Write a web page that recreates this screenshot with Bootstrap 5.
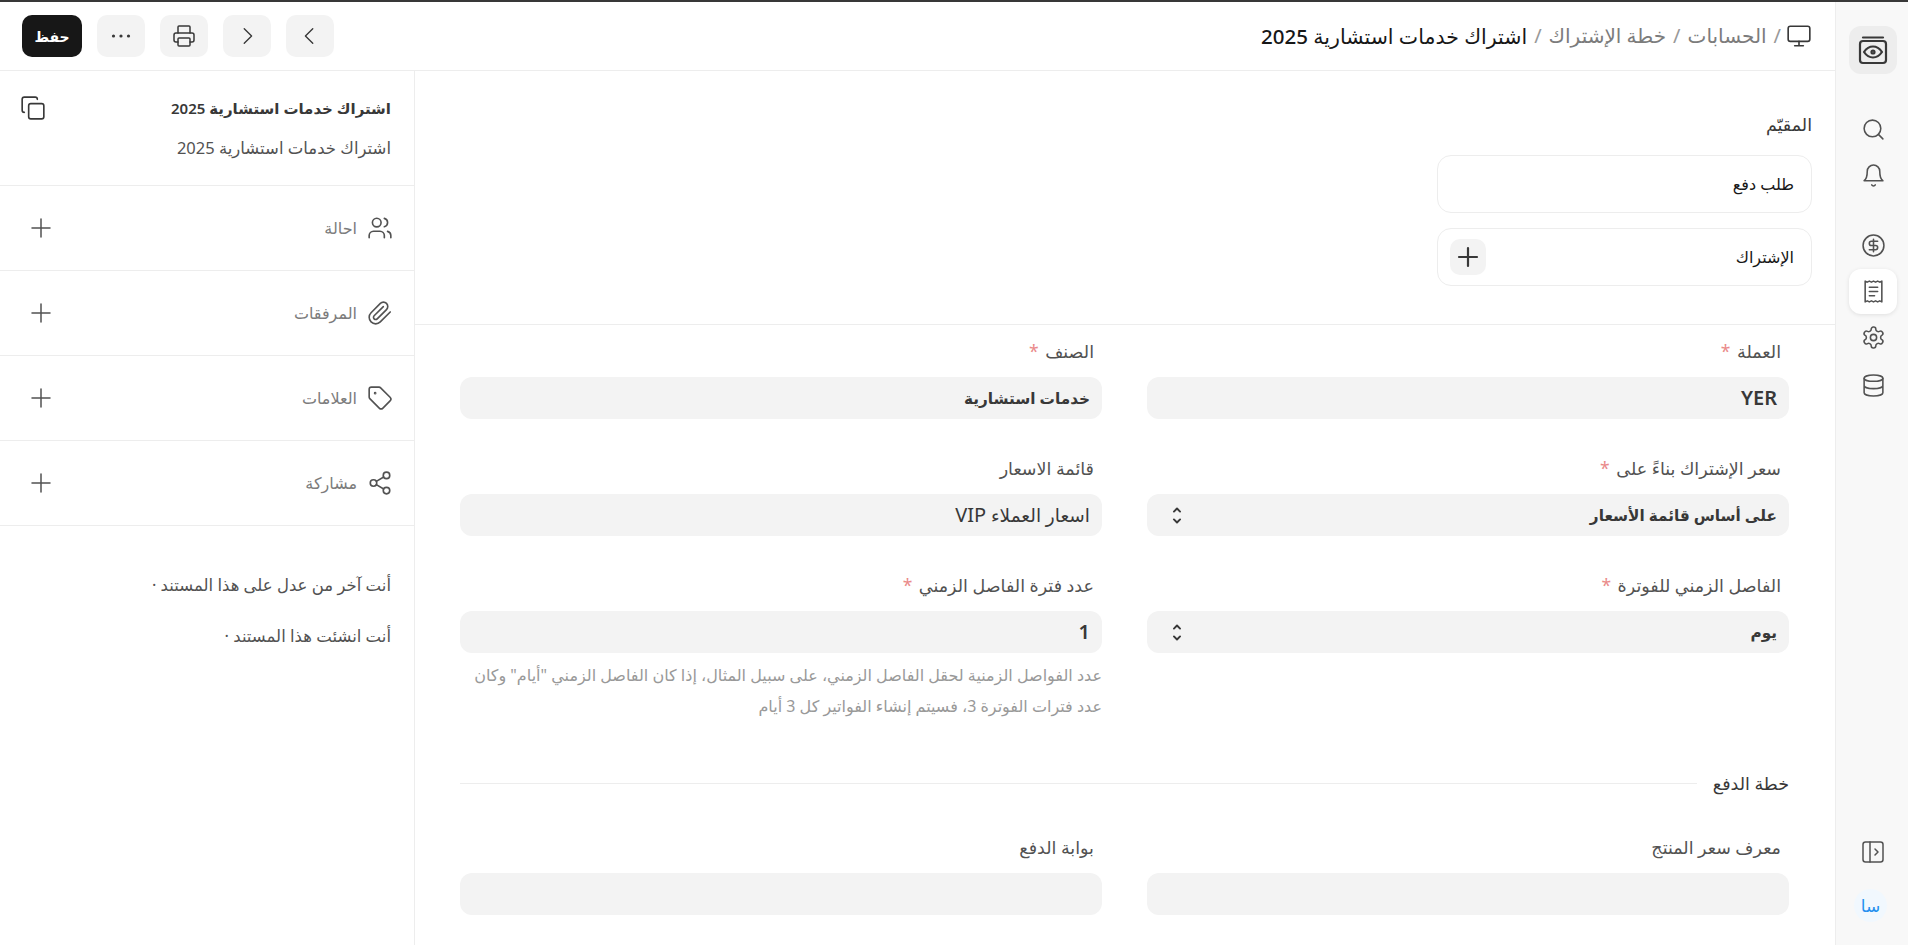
<!DOCTYPE html>
<html lang="ar" dir="rtl">
<head>
  <meta charset="UTF-8">
  <meta name="viewport" content="width=device-width, initial-scale=1">
  <title>اشتراك خدمات استشارية 2025</title>
  <link href="https://cdn.jsdelivr.net/npm/bootstrap@5.3.3/dist/css/bootstrap.min.css" rel="stylesheet">
  <style>
    html, body { height: 100%; }
    body { font-family: "Noto Sans", "DejaVu Sans", sans-serif; color: #383838; background: #fff; border-top: 2px solid #383838; overflow: hidden; font-size: 15px; }
    .ico { fill: none; stroke: currentColor; stroke-width: 1.5; stroke-linecap: round; stroke-linejoin: round; flex: none; }
    .ico-bold { stroke-width: 2.2; }
    .app-shell { height: 943px; }

    .side-rail { width: 73px; flex: none; background: #f8f8f8; border-left: 1px solid #ededed; padding: 24px 11px 23px 12px; color: #525252; }
    .rail-logo { width: 48px; height: 48px; border-radius: 12px; background: #ededed; color: #383838; margin-bottom: 33px; }
    .rail-item { width: 48px; height: 45px; border-radius: 12px; margin-bottom: 1px; }
    .rail-item.on { background: #fff; box-shadow: 0 1px 4px rgba(0,0,0,.1); }
    .rail-gap { margin-top: 24px; }
    .rail-db { margin-top: 2px; }
    .rail-avatar { width: 33px; height: 33px; border-radius: 50%; background: #f1f8fe; color: #2490ef; font-size: 17px; margin: 14px 10px 0 0; }

    .page-head { height: 69px; border-bottom: 1px solid #ededed; padding: 0 23px 0 22px; }
    .crumbs { font-size: 20px; color: #7c7c7c; }
    .crumbs b { font-size: 20.5px; font-weight: 500; color: #171717; }
    .crumbs i { font-style: normal; color: #999; margin: 0 7px; }
    .crumb-ico { color: #383838; margin-left: -2px; }
    .tool-btn { width: 48px; height: 42px; border-radius: 10px; background: #f3f3f3; color: #383838; border: 0; padding: 0; }
    .save-btn { width: 60px; height: 42px; border-radius: 10px; background: #171717; color: #fff; border: 0; padding: 0; font-size: 14px; font-weight: 600; }

    .form-pane { min-width: 0; }
    .top-block { height: 254px; border-bottom: 1px solid #ededed; padding: 41px 23px 0 0; }
    .top-label { font-size: 17.5px; line-height: 24px; margin-bottom: 19px; color: #383838; }
    .link-box { width: 375px; height: 58px; border: 1px solid #ededed; border-radius: 14px; padding: 0 17px 0 12px; margin-bottom: 15px; font-size: 16px; color: #171717; }
    .add-btn { width: 36px; height: 36px; border-radius: 10px; background: #f3f3f3; color: #383838; }

    .field-grid { display: grid; grid-template-columns: 642px 642px; column-gap: 45px; row-gap: 37px; padding: 14px 46px 0 45px; }
    .fld-label { font-size: 17.5px; line-height: 24px; margin: 0 8px 14px 0; color: #525252; display: block; }
    .fld-label em { font-style: normal; color: #ea8a8a; margin-right: 2px; }
    .fld-box { height: 42px; border-radius: 12px; background: #f3f3f3; padding: 0 12px 0 23px; font-size: 18.5px; color: #383838; }
    .fld-box.strong { font-size: 15.3px; font-weight: 600; }
    .fld-box .fld-latin { font-size: 20px; }
    .fld-help { font-size: 16px; line-height: 31px; color: #999; margin: 7px 0 0; }
    .section-title { padding: 49px 46px 40px 45px; font-size: 17.5px; line-height: 24px; color: #383838; }
    .section-title hr { flex-grow: 1; margin: 0; border-color: #ededed; opacity: 1; }

    .info-pane { width: 415px; flex: none; border-right: 1px solid #ededed; }
    .info-head { height: 115px; border-bottom: 1px solid #ededed; padding: 23px 23px 0 20px; }
    .info-title { font-size: 15px; font-weight: 600; line-height: 28px; color: #383838; }
    .info-sub { font-size: 16.5px; line-height: 28px; margin-top: 12px; color: #525252; }
    .info-copy { margin-top: 1px; }
    .info-row { height: 85px; border-bottom: 1px solid #ededed; padding: 0 21px 0 29px; color: #525252; }
    .info-row span { font-size: 16px; color: #7c7c7c; }
    .info-notes { padding: 45px 23px 0 0; font-size: 16.5px; line-height: 28px; color: #525252; }
    .info-notes div { margin-bottom: 23px; }
  </style>
</head>
<body>
  <svg width="0" height="0" class="d-block position-absolute">
    <symbol id="i-monitor" viewBox="0 0 24 24"><rect x="2" y="3" width="20" height="14" rx="2"/><path d="M8 21h8M12 17v4"/></symbol>
    <symbol id="i-search" viewBox="0 0 24 24"><circle cx="11" cy="11" r="8"/><path d="m21 21-4.3-4.3"/></symbol>
    <symbol id="i-bell" viewBox="0 0 24 24"><path d="M6 8a6 6 0 0 1 12 0c0 7 3 9 3 9H3s3-2 3-9"/><path d="M10.3 21a1.94 1.94 0 0 0 3.4 0"/></symbol>
    <symbol id="i-dollar" viewBox="0 0 24 24"><circle cx="12" cy="12" r="10"/><path d="M16 8h-6a2 2 0 1 0 0 4h4a2 2 0 1 1 0 4H8M12 18V6"/></symbol>
    <symbol id="i-receipt" viewBox="0 0 24 24"><path d="M4 2v20l2-1 2 1 2-1 2 1 2-1 2 1 2-1 2 1V2l-2 1-2-1-2 1-2-1-2 1-2-1-2 1Z"/><path d="M8 8h8M8 12h8M8 16h5"/></symbol>
    <symbol id="i-gear" viewBox="0 0 24 24"><path d="M12.22 2h-.44a2 2 0 0 0-2 2v.18a2 2 0 0 1-1 1.73l-.43.25a2 2 0 0 1-2 0l-.15-.08a2 2 0 0 0-2.73.73l-.22.38a2 2 0 0 0 .73 2.73l.15.1a2 2 0 0 1 1 1.72v.51a2 2 0 0 1-1 1.74l-.15.09a2 2 0 0 0-.73 2.73l.22.38a2 2 0 0 0 2.73.73l.15-.08a2 2 0 0 1 2 0l.43.25a2 2 0 0 1 1 1.73V20a2 2 0 0 0 2 2h.44a2 2 0 0 0 2-2v-.18a2 2 0 0 1 1-1.73l.43-.25a2 2 0 0 1 2 0l.15.08a2 2 0 0 0 2.73-.73l.22-.39a2 2 0 0 0-.73-2.73l-.15-.08a2 2 0 0 1-1-1.74v-.5a2 2 0 0 1 1-1.74l.15-.09a2 2 0 0 0 .73-2.73l-.22-.38a2 2 0 0 0-2.73-.73l-.15.08a2 2 0 0 1-2 0l-.43-.25a2 2 0 0 1-1-1.73V4a2 2 0 0 0-2-2z"/><circle cx="12" cy="12" r="3"/></symbol>
    <symbol id="i-db" viewBox="0 0 24 24"><ellipse cx="12" cy="5" rx="9" ry="3"/><path d="M3 5v14a9 3 0 0 0 18 0V5M3 12a9 3 0 0 0 18 0"/></symbol>
    <symbol id="i-panel" viewBox="0 0 24 24"><rect x="2" y="2" width="20" height="20" rx="2.5"/><path d="M9 2v20M14 9l3 3-3 3"/></symbol>
    <symbol id="i-users" viewBox="0 0 24 24"><path d="M16 21v-2a4 4 0 0 0-4-4H6a4 4 0 0 0-4 4v2"/><circle cx="9" cy="7" r="4"/><path d="M22 21v-2a4 4 0 0 0-3-3.87M16 3.13a4 4 0 0 1 0 7.75"/></symbol>
    <symbol id="i-clip" viewBox="0 0 24 24"><path d="m21.44 11.05-9.19 9.19a6 6 0 0 1-8.49-8.49l8.57-8.57A4 4 0 1 1 18 8.84l-8.59 8.57a2 2 0 0 1-2.83-2.83l8.49-8.48"/></symbol>
    <symbol id="i-tag" viewBox="0 0 24 24"><path d="M12.586 2.586A2 2 0 0 0 11.172 2H4a2 2 0 0 0-2 2v7.172a2 2 0 0 0 .586 1.414l8.704 8.704a2.426 2.426 0 0 0 3.42 0l6.58-6.58a2.426 2.426 0 0 0 0-3.42z"/><circle cx="7.5" cy="7.5" r=".5"/></symbol>
    <symbol id="i-share" viewBox="0 0 24 24"><circle cx="18" cy="5" r="3"/><circle cx="6" cy="12" r="3"/><circle cx="18" cy="19" r="3"/><path d="m8.59 13.51 6.83 3.98M15.41 6.51l-6.82 3.98"/></symbol>
    <symbol id="i-plus" viewBox="0 0 24 24"><path d="M12 3v18M3 12h18"/></symbol>
    <symbol id="i-copy" viewBox="0 0 24 24"><rect x="8" y="8" width="14" height="14" rx="2"/><path d="M4 16c-1.1 0-2-.9-2-2V4c0-1.1.9-2 2-2h10c1.1 0 2 .9 2 2"/></symbol>
    <symbol id="i-updown" viewBox="0 0 16 24"><path d="m4.500 7.500 3.500-3.500 3.500 3.500M4.500 16.500l3.500 3.500 3.500-3.500"/></symbol>
  </svg>

  <div class="app-shell d-flex">
    <!-- شريط الايقونات -->
    <aside class="side-rail d-flex flex-column">
      <div class="rail-logo d-flex align-items-center justify-content-center">
        <svg class="ico ico-bold" width="30" height="30" viewBox="0 0 30 30"><path d="M5 2.500h20"/><rect x="2" y="6" width="26" height="22" rx="3"/><path d="M6 17c2.500-3.700 5.500-5.500 9-5.500s6.500 1.800 9 5.500c-2.500 3.700-5.500 5.500-9 5.500S8.500 20.700 6 17Z"/><circle cx="15" cy="17" r="1.500"/></svg>
      </div>
      <div class="rail-item d-flex align-items-center justify-content-center"><svg class="ico" width="25" height="25"><use href="#i-search"/></svg></div>
      <div class="rail-item d-flex align-items-center justify-content-center"><svg class="ico" width="25" height="25"><use href="#i-bell"/></svg></div>
      <div class="rail-item rail-gap d-flex align-items-center justify-content-center"><svg class="ico" width="25" height="25"><use href="#i-dollar"/></svg></div>
      <div class="rail-item on d-flex align-items-center justify-content-center"><svg class="ico" width="25" height="25"><use href="#i-receipt"/></svg></div>
      <div class="rail-item d-flex align-items-center justify-content-center"><svg class="ico" width="25" height="25"><use href="#i-gear"/></svg></div>
      <div class="rail-item rail-db d-flex align-items-center justify-content-center"><svg class="ico" width="25" height="25"><use href="#i-db"/></svg></div>
      <div class="rail-item mt-auto d-flex align-items-center justify-content-center"><svg class="ico" width="24" height="24"><use href="#i-panel"/></svg></div>
      <div class="rail-avatar d-flex align-items-center justify-content-center">سا</div>
    </aside>

    <main class="flex-grow-1 d-flex flex-column" style="min-width:0">
      <header class="page-head d-flex align-items-center justify-content-between">
        <div class="crumbs d-flex align-items-center">
          <svg class="ico crumb-ico" width="26" height="26"><use href="#i-monitor"/></svg>
          <i>/</i><span>الحسابات</span><i>/</i><span>خطة الإشتراك</span><i>/</i><b>اشتراك خدمات استشارية 2025</b>
        </div>
        <div class="d-flex align-items-center" style="gap:15px">
          <button class="tool-btn d-flex align-items-center justify-content-center" aria-label="السابق"><svg class="ico" width="22" height="22" viewBox="0 0 24 24"><path d="m15 4-8 8 8 8"/></svg></button>
          <button class="tool-btn d-flex align-items-center justify-content-center" aria-label="التالي"><svg class="ico" width="22" height="22" viewBox="0 0 24 24"><path d="m9 4 8 8-8 8"/></svg></button>
          <button class="tool-btn d-flex align-items-center justify-content-center" aria-label="طباعة"><svg class="ico" width="24" height="24" viewBox="0 0 24 24"><path d="M6 18H4a2 2 0 0 1-2-2v-5a2 2 0 0 1 2-2h16a2 2 0 0 1 2 2v5a2 2 0 0 1-2 2h-2"/><path d="M6 9V3a1 1 0 0 1 1-1h10a1 1 0 0 1 1 1v6"/><rect x="6" y="14" width="12" height="8" rx="1"/></svg></button>
          <button class="tool-btn d-flex align-items-center justify-content-center" aria-label="المزيد"><svg width="20" height="4" viewBox="0 0 20 4" fill="#383838"><circle cx="2.500" cy="2" r="1.600"/><circle cx="10" cy="2" r="1.600"/><circle cx="17.500" cy="2" r="1.600"/></svg></button>
          <button class="save-btn">حفظ</button>
        </div>
      </header>

      <div class="flex-grow-1 d-flex" style="min-height:0">
        <section class="form-pane flex-grow-1">
          <div class="top-block">
            <div class="top-label">المقيّم</div>
            <div class="link-box d-flex align-items-center">طلب دفع</div>
            <div class="link-box d-flex align-items-center justify-content-between">
              <span>الإشتراك</span>
              <div class="add-btn d-flex align-items-center justify-content-center"><svg class="ico ico-bold" width="24" height="24"><use href="#i-plus"/></svg></div>
            </div>
          </div>

          <div class="field-grid">
            <div>
              <label class="fld-label">العملة <em>*</em></label>
              <div class="fld-box strong d-flex align-items-center"><span class="fld-latin">YER</span></div>
            </div>
            <div>
              <label class="fld-label">الصنف <em>*</em></label>
              <div class="fld-box strong d-flex align-items-center">خدمات استشارية</div>
            </div>
            <div>
              <label class="fld-label">سعر الإشتراك بناءً على <em>*</em></label>
              <div class="fld-box strong d-flex align-items-center justify-content-between"><span>على أساس قائمة الأسعار</span><svg class="ico ico-bold" width="14" height="21"><use href="#i-updown"/></svg></div>
            </div>
            <div>
              <label class="fld-label">قائمة الاسعار</label>
              <div class="fld-box d-flex align-items-center"><span>اسعار العملاء <span class="fld-latin">VIP</span></span></div>
            </div>
            <div>
              <label class="fld-label">الفاصل الزمني للفوترة <em>*</em></label>
              <div class="fld-box strong d-flex align-items-center justify-content-between"><span>يوم</span><svg class="ico ico-bold" width="14" height="21"><use href="#i-updown"/></svg></div>
            </div>
            <div>
              <label class="fld-label">عدد فترة الفاصل الزمني <em>*</em></label>
              <div class="fld-box strong d-flex align-items-center"><span class="fld-latin">1</span></div>
              <p class="fld-help">عدد الفواصل الزمنية لحقل الفاصل الزمني، على سبيل المثال، إذا كان الفاصل الزمني "أيام" وكان عدد فترات الفوترة 3، فسيتم إنشاء الفواتير كل 3 أيام</p>
            </div>
          </div>

          <div class="section-title d-flex align-items-center gap-3">
            <span>خطة الدفع</span><hr>
          </div>

          <div class="field-grid pt-0">
            <div>
              <label class="fld-label">معرف سعر المنتج</label>
              <div class="fld-box"></div>
            </div>
            <div>
              <label class="fld-label">بوابة الدفع</label>
              <div class="fld-box"></div>
            </div>
          </div>
        </section>

        <aside class="info-pane">
          <div class="info-head">
            <div class="d-flex justify-content-between">
              <div class="info-title">اشتراك خدمات استشارية 2025</div>
              <svg class="ico info-copy" width="26" height="26"><use href="#i-copy"/></svg>
            </div>
            <div class="info-sub">اشتراك خدمات استشارية 2025</div>
          </div>
          <div class="info-row d-flex align-items-center justify-content-between">
            <div class="d-flex align-items-center" style="gap:10px"><svg class="ico" width="26" height="26"><use href="#i-users"/></svg><span>احالة</span></div>
            <svg class="ico" width="24" height="24"><use href="#i-plus"/></svg>
          </div>
          <div class="info-row d-flex align-items-center justify-content-between">
            <div class="d-flex align-items-center" style="gap:10px"><svg class="ico" width="26" height="26"><use href="#i-clip"/></svg><span>المرفقات</span></div>
            <svg class="ico" width="24" height="24"><use href="#i-plus"/></svg>
          </div>
          <div class="info-row d-flex align-items-center justify-content-between">
            <div class="d-flex align-items-center" style="gap:10px"><svg class="ico" width="26" height="26"><use href="#i-tag"/></svg><span>العلامات</span></div>
            <svg class="ico" width="24" height="24"><use href="#i-plus"/></svg>
          </div>
          <div class="info-row d-flex align-items-center justify-content-between">
            <div class="d-flex align-items-center" style="gap:10px"><svg class="ico" width="26" height="26"><use href="#i-share"/></svg><span>مشاركة</span></div>
            <svg class="ico" width="24" height="24"><use href="#i-plus"/></svg>
          </div>
          <div class="info-notes">
            <div>أنت آخر من عدل على هذا المستند ·</div>
            <div>أنت انشئت هذا المستند ·</div>
          </div>
        </aside>
      </div>
    </main>
  </div>
  <script src="https://cdn.jsdelivr.net/npm/bootstrap@5.3.3/dist/js/bootstrap.bundle.min.js"></script>
</body>
</html>
